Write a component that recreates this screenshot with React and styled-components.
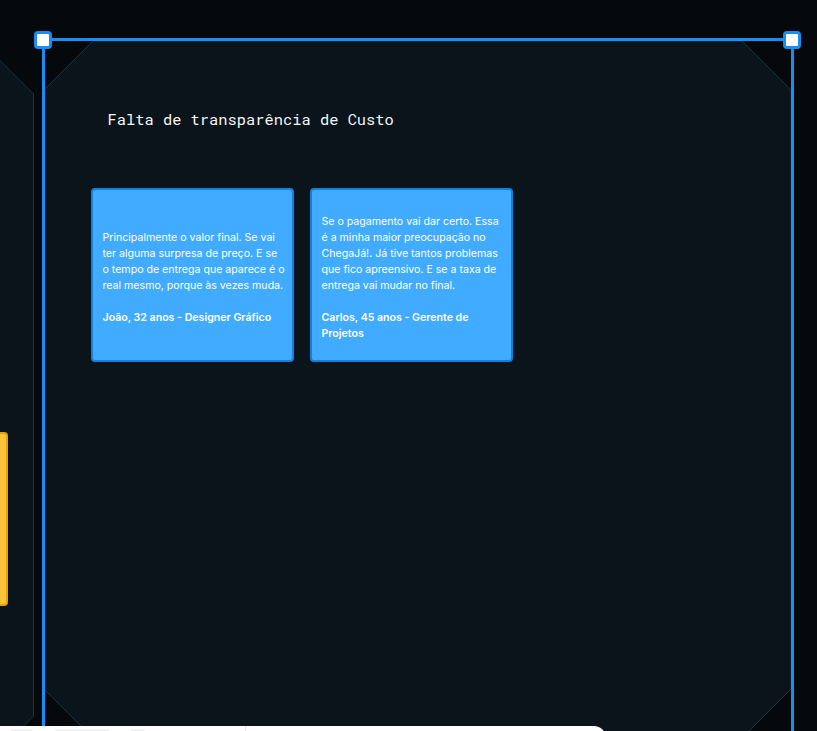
import React from "react";
import styled, { createGlobalStyle } from "styled-components";

const Global = createGlobalStyle`
  html, body { margin: 0; padding: 0; background: #05090c; overflow: hidden; }
  #root { width: 817px; height: 731px; }
`;

const Canvas = styled.div`
  position: relative;
  width: 817px;
  height: 731px;
  overflow: hidden;
  background: #05090c;
`;

const Frame = styled.div`
  position: absolute;
  left: ${(p) => p.$x}px;
  top: ${(p) => p.$y}px;
  width: ${(p) => p.$w}px;
  height: ${(p) => p.$h}px;
`;

const FrameShape = styled.svg`
  position: absolute;
  inset: 0;
  width: 100%;
  height: 100%;
  overflow: visible;
`;

const FrameContent = styled.div`
  position: relative;
  padding: 68px 0 0 47px;
  display: flex;
  flex-direction: column;
`;

const Title = styled.h2`
  margin: 0 0 0 17px;
  font-family: "Roboto Mono", "DejaVu Sans Mono", monospace;
  font-weight: 400;
  font-size: 15.4px;
  line-height: 20px;
  color: #f4f6f8;
`;

const CardRow = styled.div`
  margin-top: 59px;
  display: flex;
  gap: 16px;
`;

const Card = styled.div`
  box-sizing: border-box;
  width: 203px;
  height: 174px;
  background: #40abff;
  border: 2px solid #1480de;
  border-radius: 4px;
  padding: 5px 4px 0 10px;
  display: flex;
  flex-direction: column;
  justify-content: center;
  font-family: Inter, "Noto Sans", sans-serif;
  font-size: 10.6px;
  line-height: 16px;
  color: #ffffff;
  white-space: nowrap;
`;

const Quote = styled.p`
  margin: 0;
  font-weight: 400;
`;

const Author = styled.p`
  margin: 16px 0 0;
  font-weight: 600;
`;

const Selection = styled.div`
  position: absolute;
  left: 42px;
  top: 38px;
  width: 752px;
  height: 760px;
  box-sizing: border-box;
  border: 3px solid #1b8cf3;
  pointer-events: none;
`;

const Handle = styled.div`
  position: absolute;
  left: ${(p) => p.$x}px;
  top: 31px;
  width: 18px;
  height: 18px;
  box-sizing: border-box;
  background: #ffffff;
  border: 3px solid #1b8cf3;
  border-radius: 4px;
`;

const Sticky = styled.div`
  position: absolute;
  left: -30px;
  top: 432px;
  width: 38px;
  height: 174px;
  box-sizing: border-box;
  background: #fdc23c;
  border: 2px solid #e6a300;
  border-radius: 4px;
`;

const Toolbar = styled.div`
  position: absolute;
  left: 0;
  top: 726px;
  width: 606px;
  height: 40px;
  background: #ffffff;
  border-top-right-radius: 12px;
  display: flex;
`;

const ToolGroup = styled.div`
  width: ${(p) => p.$w}px;
  height: 100%;
  border-right: ${(p) => (p.$divider ? "1px solid #e3e5e8" : "none")};
  display: flex;
  gap: 20px;
  padding: 3px 0 0 10px;
  box-sizing: border-box;
`;

const ToolBlob = styled.div`
  width: ${(p) => p.$w}px;
  height: 8px;
  border-radius: 4px;
  background: #f1f2f4;
`;

function PanelShape({ w, h, c }) {
  const pts = `${c},0 ${w - c},0 ${w},${c} ${w},${h - c} ${w - c},${h} ${c},${h} 0,${h - c} 0,${c}`;
  return (
    <FrameShape viewBox={`0 0 ${w} ${h}`} preserveAspectRatio="none">
      <polygon points={pts} fill="#0a141a" stroke="#173541" strokeWidth="1" />
    </FrameShape>
  );
}

const cards = [
  {
    quote: [
      "Principalmente o valor final. Se vai",
      "ter alguma surpresa de preço. E se",
      "o tempo de entrega que aparece é o",
      "real mesmo, porque às vezes muda.",
    ],
    author: ["João, 32 anos - Designer Gráfico"],
  },
  {
    quote: [
      "Se o pagamento vai dar certo. Essa",
      "é a minha maior preocupação no",
      "ChegaJá!. Já tive tantos problemas",
      "que fico apreensivo. E se a taxa de",
      "entrega vai mudar no final.",
    ],
    author: ["Carlos, 45 anos - Gerente de", "Projetos"],
  },
];

const withBreaks = (lines) =>
  lines.map((l, i) => (
    <React.Fragment key={i}>
      {l}
      {i < lines.length - 1 && <br />}
    </React.Fragment>
  ));

export default function App() {
  return (
    <>
      <Global />
      <Canvas>
        <Frame $x={-316} $y={45} $w={349.5} $h={720}>
          <PanelShape w={349.5} h={720} c={49} />
        </Frame>

        <Sticky />

        <Frame $x={43.5} $y={41} $w={747} $h={697}>
          <PanelShape w={747} h={697} c={49} />
          <FrameContent>
            <Title>Falta de transparência de Custo</Title>
            <CardRow>
              {cards.map((c, i) => (
                <Card key={i}>
                  <Quote>{withBreaks(c.quote)}</Quote>
                  <Author>{withBreaks(c.author)}</Author>
                </Card>
              ))}
            </CardRow>
          </FrameContent>
        </Frame>

        <Selection />
        <Handle $x={34} />
        <Handle $x={783} />

        <Toolbar>
          <ToolGroup $w={246} $divider>
            <ToolBlob $w={24} />
            <ToolBlob $w={56} />
            <ToolBlob $w={16} />
          </ToolGroup>
          <ToolGroup $w={360} />
        </Toolbar>
      </Canvas>
    </>
  );
}
